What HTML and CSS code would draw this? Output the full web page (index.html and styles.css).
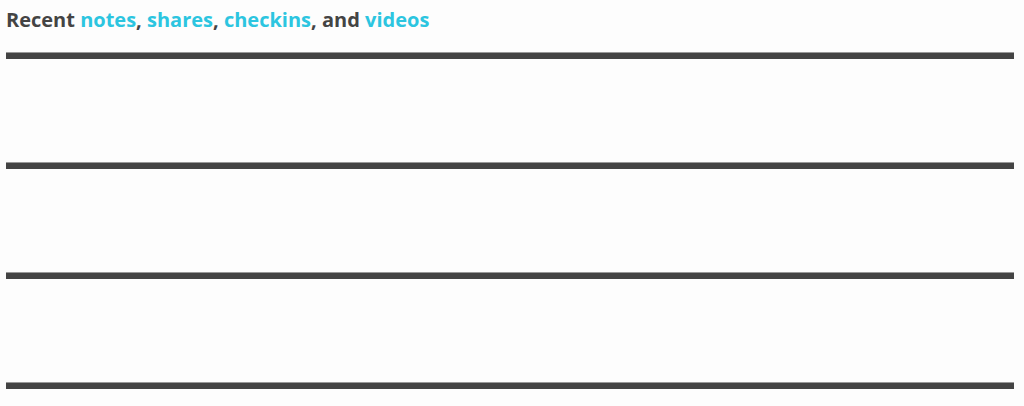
FILE: index.html
```html
<!DOCTYPE html>
<html>
<head>
<meta charset="utf-8">
<link rel="stylesheet" href="styles.css">
</head>
<body>
<div class="page">
  <h2 class="title">Recent <a href="#">notes</a>, <a href="#">shares</a>, <a href="#">checkins</a>, and <a href="#">videos</a></h2>
  <div class="feed">
    <div class="item"></div>
    <div class="item"></div>
    <div class="item"></div>
    <div class="item"></div>
  </div>
</div>
</body>
</html>
```
FILE: styles.css
```css
html, body {
  margin: 0;
  padding: 0;
  background: #fdfdfd;
}
.page {
  width: 1008px;
  padding: 0 6px;
  font-family: "Open Sans", "Lato", sans-serif;
  color: #444;
}
.title {
  margin: 0;
  padding-top: 8px;
  height: 44px;
  font-size: 20px;
  line-height: 24px;
  font-weight: 700;
  color: #444;
}
.title a {
  color: #2cc5e0;
  text-decoration: none;
}
.feed {
  display: flex;
  flex-direction: column;
  gap: 103px;
}
.item {
  height: 6px;
  background: #444;
  border-top: 1px solid #999;
}
```
